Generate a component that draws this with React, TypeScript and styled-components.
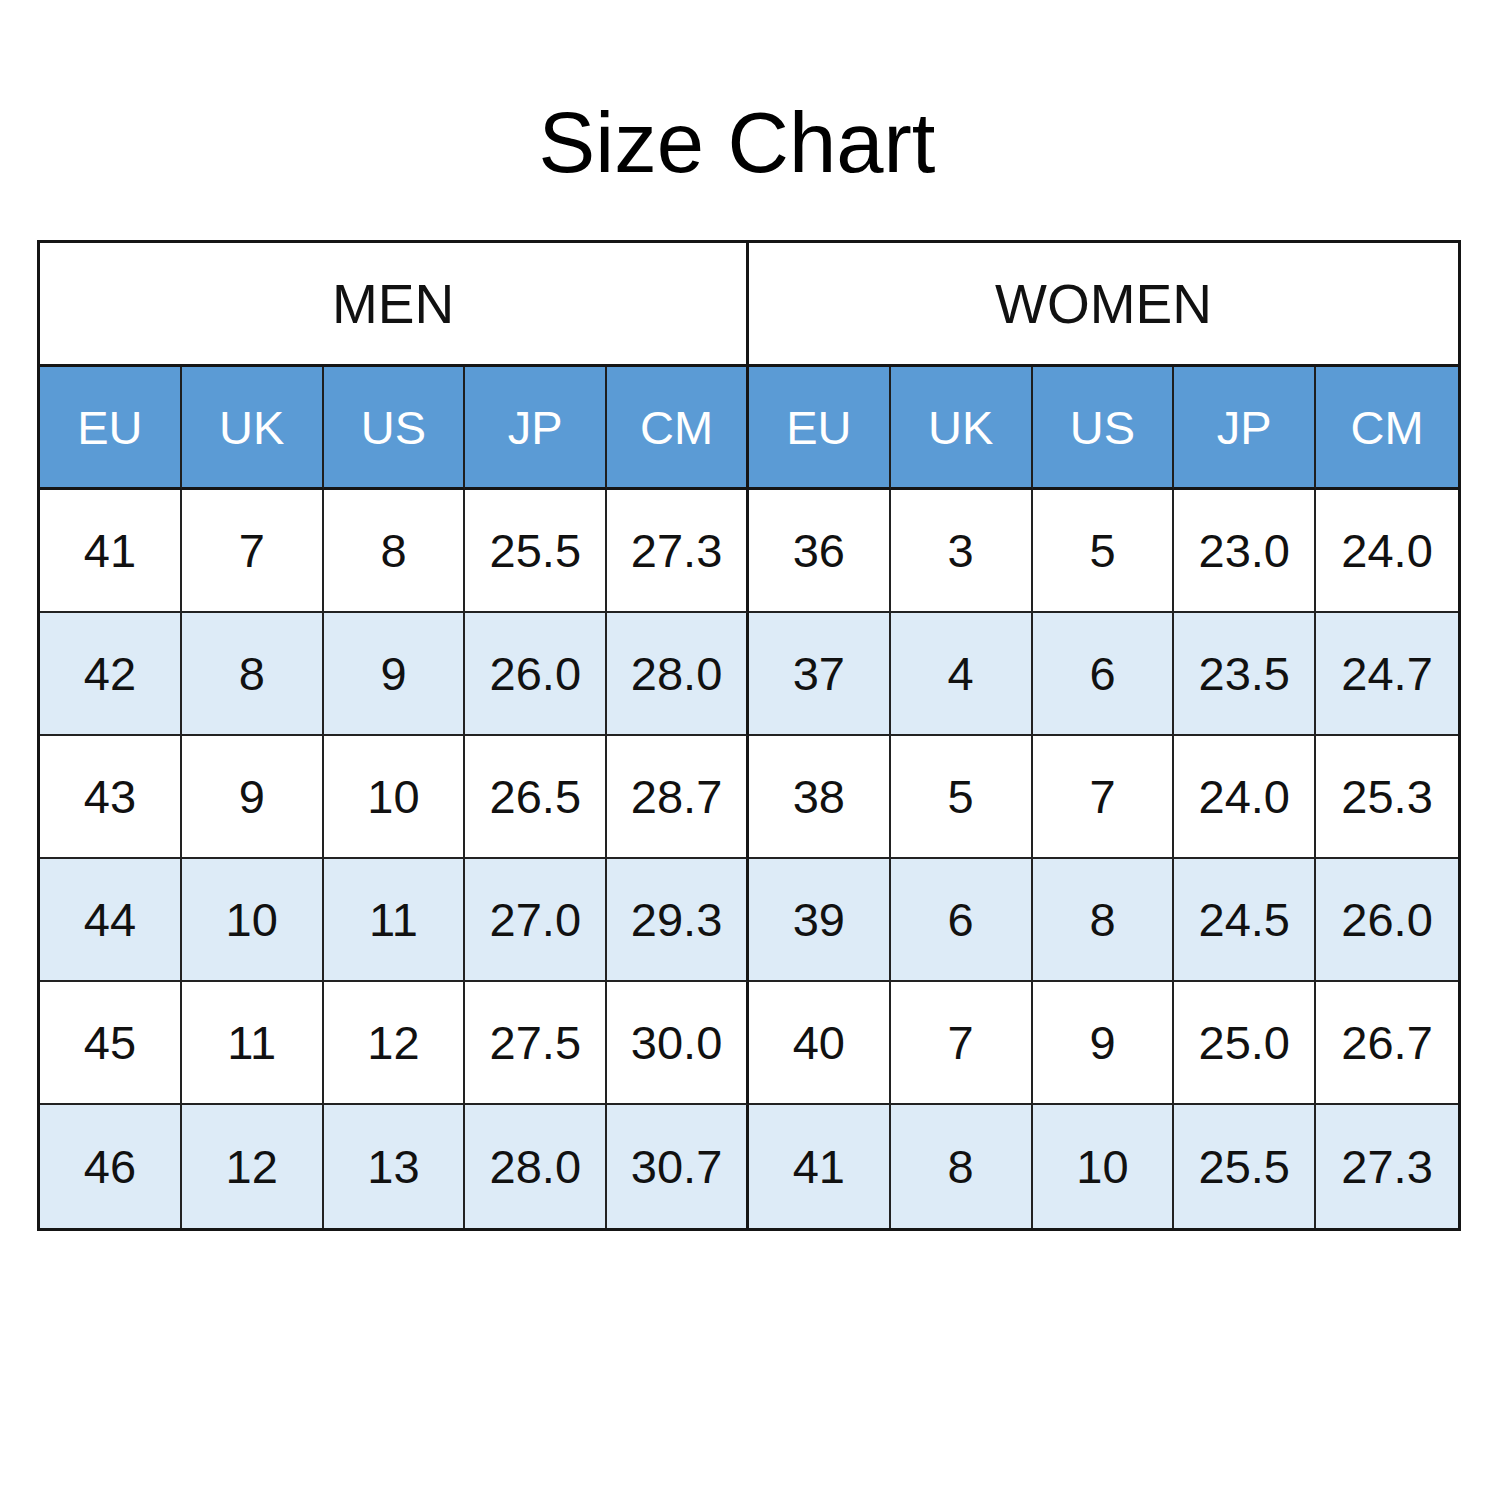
import React from 'react';
import styled, { createGlobalStyle } from 'styled-components';

const GlobalStyle = createGlobalStyle`
  html, body {
    margin: 0;
    padding: 0;
    background: #ffffff;
  }
  body {
    font-family: "Liberation Sans", Arial, sans-serif;
    color: #000;
  }
`;

const Page = styled.div`
  width: 1500px;
  height: 1500px;
  background: #fff;
  padding: 100px 39px 0 37px;
  box-sizing: border-box;
`;

const Title = styled.h1`
  margin: 0 0 55px 0;
  padding-right: 24px;
  font-size: 85px;
  line-height: 85px;
  font-weight: normal;
  text-align: center;
  color: #000;
`;

const Table = styled.table`
  width: 1424px;
  table-layout: fixed;
  border-collapse: separate;
  border-spacing: 0;
  border: 3px solid #151515;
  box-sizing: border-box;
`;

const GroupCell = styled.th<{ $last?: boolean }>`
  height: 124px;
  box-sizing: border-box;
  padding: 0;
  border-bottom: 3px solid #151515;
  border-right: ${p => (p.$last ? 'none' : '3px solid #151515')};
  background: #fff;
  font-size: 55px;
  font-weight: normal;
  color: #111;
  text-align: center;
  vertical-align: middle;
`;

const HeadCell = styled.th<{ $divider?: boolean; $last?: boolean }>`
  height: 123px;
  box-sizing: border-box;
  padding: 0;
  background: #5b9bd5;
  border-bottom: 3px solid #151515;
  border-right: ${p => (p.$last ? 'none' : p.$divider ? '3px solid #151515' : '2px solid #1e1e1e')};
  font-size: 47px;
  font-weight: normal;
  color: #fff;
  text-align: center;
  vertical-align: middle;
`;

const DataCell = styled.td<{ $alt: boolean; $divider?: boolean; $last?: boolean; $bottom?: boolean }>`
  height: 123px;
  box-sizing: border-box;
  padding: 0;
  background: ${p => (p.$alt ? '#ddebf7' : '#ffffff')};
  border-bottom: ${p => (p.$bottom ? 'none' : '2px solid #222')};
  border-right: ${p => (p.$last ? 'none' : p.$divider ? '3px solid #151515' : '2px solid #222')};
  font-size: 47px;
  color: #111;
  text-align: center;
  vertical-align: middle;
`;

const columns = ['EU', 'UK', 'US', 'JP', 'CM'];

const rows: string[][] = [
  ['41', '7', '8', '25.5', '27.3', '36', '3', '5', '23.0', '24.0'],
  ['42', '8', '9', '26.0', '28.0', '37', '4', '6', '23.5', '24.7'],
  ['43', '9', '10', '26.5', '28.7', '38', '5', '7', '24.0', '25.3'],
  ['44', '10', '11', '27.0', '29.3', '39', '6', '8', '24.5', '26.0'],
  ['45', '11', '12', '27.5', '30.0', '40', '7', '9', '25.0', '26.7'],
  ['46', '12', '13', '28.0', '30.7', '41', '8', '10', '25.5', '27.3'],
];

const App: React.FC = () => {
  const heads = [...columns, ...columns];
  return (
    <Page>
      <GlobalStyle />
      <Title>Size Chart</Title>
      <Table>
        <thead>
          <tr>
            <GroupCell colSpan={5}>MEN</GroupCell>
            <GroupCell colSpan={5} $last>WOMEN</GroupCell>
          </tr>
          <tr>
            {heads.map((h, i) => (
              <HeadCell key={i} $divider={i === 4} $last={i === 9}>
                {h}
              </HeadCell>
            ))}
          </tr>
        </thead>
        <tbody>
          {rows.map((row, r) => (
            <tr key={r}>
              {row.map((v, i) => (
                <DataCell
                  key={i}
                  $alt={r % 2 === 1}
                  $divider={i === 4}
                  $last={i === 9}
                  $bottom={r === rows.length - 1}
                >
                  {v}
                </DataCell>
              ))}
            </tr>
          ))}
        </tbody>
      </Table>
    </Page>
  );
};

export default App;
